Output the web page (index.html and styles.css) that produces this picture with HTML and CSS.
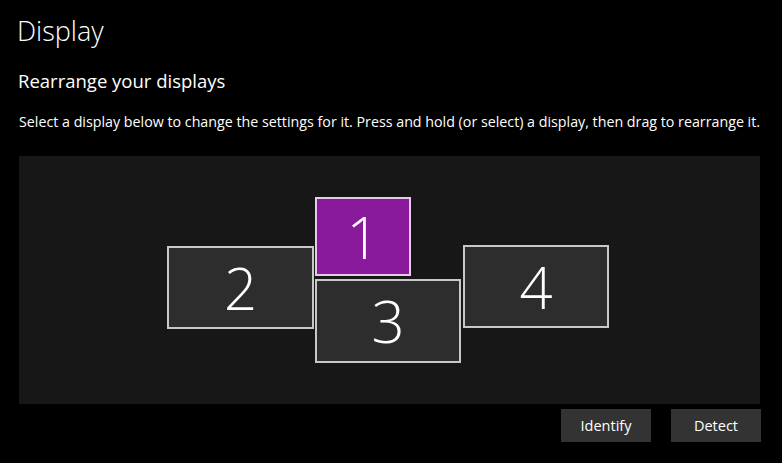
FILE: index.html
```html
<!DOCTYPE html>
<html lang="en">
<head>
    <meta charset="UTF-8">
    <title>Display</title>
    <link rel="stylesheet" href="styles.css">
</head>
<body>
    <div class="page">
        <h1>Display</h1>
        <h2>Rearrange your displays</h2>
        <p class="hint">Select a display below to change the settings for it. Press and hold (or select) a display, then drag to rearrange it.</p>

        <div class="arrange">
            <div class="monitor selected m1">1</div>
            <div class="monitor m2">2</div>
            <div class="monitor m3">3</div>
            <div class="monitor m4">4</div>
        </div>

        <div class="actions">
            <button class="btn">Identify</button>
            <button class="btn">Detect</button>
        </div>
    </div>
</body>
</html>
```

FILE: styles.css
```css
body {
    margin: 0;
    background-color: #000;
    color: #fff;
    font-family: "Open Sans", "Noto Sans", sans-serif;
}
.page {
    padding: 13px 22px 0 19px;
}
h1 {
    margin: 0 0 0 -2px;
    font-size: 27px;
    font-weight: 300;
    line-height: 36px;
}
h2 {
    margin: 20px 0 0 -1px;
    font-size: 18.5px;
    font-weight: 400;
    line-height: 24px;
}
.hint {
    margin: 19px 0 0 0;
    font-size: 14.25px;
    line-height: 20px;
    white-space: nowrap;
}
.arrange {
    position: relative;
    margin-top: 24px;
    height: 248px;
    width: 741px;
    background-color: #171717;
}
.monitor {
    position: absolute;
    box-sizing: border-box;
    border: 2px solid #c8c8c8;
    background-color: #2d2d2d;
    display: flex;
    align-items: center;
    justify-content: center;
    font-size: 58px;
    font-weight: 300;
    line-height: 1;
}
.monitor.selected {
    background-color: #891a9b;
    border-color: #e4cce6;
}
.m1 { left: 296px; top: 41px; width: 96px; height: 79px; }
.m2 { left: 148px; top: 90px; width: 147px; height: 83px; }
.m3 { left: 296px; top: 123px; width: 146px; height: 84px; }
.m4 { left: 444px; top: 89px; width: 146px; height: 83px; }
.actions {
    display: flex;
    justify-content: flex-end;
    gap: 20px;
    margin-top: 5px;
    width: 742px;
}
.btn {
    width: 90px;
    height: 33px;
    border: none;
    background-color: #333;
    color: #fff;
    font-family: inherit;
    font-size: 14.5px;
}
```
